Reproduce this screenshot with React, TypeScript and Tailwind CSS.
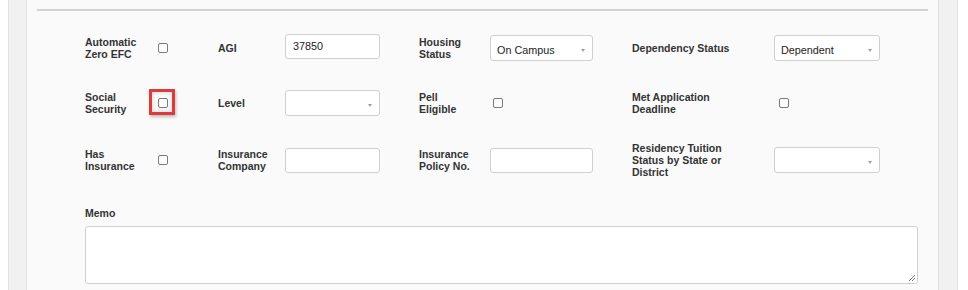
import React from 'react'

const Label = ({ text, w }: { text: string; w: string }) => (
  <div className={`${w} text-[10.5px] leading-[12px] font-bold text-[#333]`}>{text}</div>
)

const Check = () => (
  <span className="block w-[10px] h-[10px] border border-[#7a7a7a] rounded-[2px] bg-white" />
)

const TextInput = ({ value = '', w }: { value?: string; w: string }) => (
  <div className={`${w} h-[25px] border border-[#cfcfcf] rounded-[3px] bg-white pl-[7px] flex items-center text-[10.8px] text-[#222]`}>
    {value}
  </div>
)

const Select = ({ value = '', w }: { value?: string; w: string }) => (
  <div className={`${w} h-[26px] border border-[#cfcfcf] rounded-[3px] bg-white pl-[6px] pr-[7px] pt-[4px] flex items-center justify-between text-[10.8px] text-[#222]`}>
    <span>{value}</span>
    <span className="w-0 h-0 border-l-[2.5px] border-r-[2.5px] border-t-[3px] border-l-transparent border-r-transparent border-t-[#a0a0a0]" />
  </div>
)

const App = () => {
  return (
    <div className="flex w-[968px] h-[290px] overflow-hidden bg-white" style={{ fontFamily: '"Liberation Sans", Arial, sans-serif' }}>
      <div className="w-[8px]" />
      <div className="w-[19px] bg-[#f1f1f1] border-x border-[#e2e2e2]" />
      <div className="w-[911px] bg-[#fafafa] pt-[9px] px-[10px]">
        <div className="h-[2px] bg-[#d4d4d4]" />
        <div className="pl-[48px] pr-[10px] pt-[23px]">
          <div className="grid grid-cols-[73px_60px_67px_134px_71px_142px_142px_106px]">
            {/* row 1 */}
            <div className="h-[28px] flex items-center"><Label text="Automatic Zero EFC" w="w-[62px]" /></div>
            <div className="flex items-center"><Check /></div>
            <div className="flex items-center"><Label text="AGI" w="w-[58px]" /></div>
            <div className="flex items-start"><TextInput value="37850" w="w-[95px]" /></div>
            <div className="flex items-center"><Label text="Housing Status" w="w-[58px]" /></div>
            <div className="flex items-center"><Select value="On Campus" w="w-[103px]" /></div>
            <div className="flex items-center"><Label text="Dependency Status" w="w-[100px]" /></div>
            <div className="flex items-center"><Select value="Dependent" w="w-[107px]" /></div>

            {/* row 2 */}
            <div className="h-[28px] mt-[27px] flex items-center"><Label text="Social Security" w="w-[62px]" /></div>
            <div className="mt-[27px] flex items-center">
              <div className="relative">
                <Check />
                <span className="absolute -left-[9px] -top-[9px] w-[26px] h-[26px] border-[3px] border-[#dc3b3b] shadow-[1px_2px_3px_rgba(0,0,0,0.25),inset_0_0_4px_rgba(0,0,0,0.2)]" />
              </div>
            </div>
            <div className="mt-[27px] flex items-center"><Label text="Level" w="w-[58px]" /></div>
            <div className="mt-[27px] flex items-center"><Select w="w-[95px]" /></div>
            <div className="mt-[27px] flex items-center"><Label text="Pell Eligible" w="w-[58px]" /></div>
            <div className="mt-[27px] flex items-center pl-[3px]"><Check /></div>
            <div className="mt-[27px] flex items-center"><Label text="Met Application Deadline" w="w-[100px]" /></div>
            <div className="mt-[27px] flex items-center pl-[5px]"><Check /></div>

            {/* row 3 */}
            <div className="h-[36px] mt-[25px] flex items-center"><Label text="Has Insurance" w="w-[62px]" /></div>
            <div className="mt-[25px] flex items-center"><Check /></div>
            <div className="mt-[25px] flex items-center"><Label text="Insurance Company" w="w-[58px]" /></div>
            <div className="mt-[25px] flex items-center"><TextInput w="w-[95px]" /></div>
            <div className="mt-[25px] flex items-center"><Label text="Insurance Policy No." w="w-[58px]" /></div>
            <div className="mt-[25px] flex items-center"><TextInput w="w-[103px]" /></div>
            <div className="mt-[25px] flex items-center"><Label text="Residency Tuition Status by State or District" w="w-[100px]" /></div>
            <div className="mt-[25px] flex items-center"><Select w="w-[107px]" /></div>
          </div>

          <div className="mt-[29px] mb-[7px] text-[10.5px] leading-[12px] font-bold text-[#333]">Memo</div>
          <div className="relative h-[58px] border border-[#cfcfcf] rounded-[3px] bg-white">
            <svg className="absolute right-[1px] bottom-[1px]" width="9" height="9" viewBox="0 0 9 9">
              <path d="M8 2 L2 8 M8 5 L5 8" stroke="#777" strokeWidth="1" />
            </svg>
          </div>
        </div>
      </div>
      <div className="w-[20px] bg-[#f1f1f1] border-x border-[#e2e2e2]" />
      <div className="flex-1" />
    </div>
  )
}

export default App
